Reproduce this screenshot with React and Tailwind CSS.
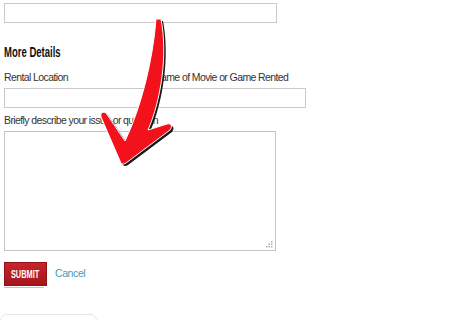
export default function App() {
  const arrow =
    'M156 19 L161 19 C168 55 161 100 148 130 L167 124 C171 123 173 126 170 130 L126 163 C123 165 121 164 120 161 L101 117 C100 113 103 111 106 113 L125 141 C141 108 153 60 156 19 Z'

  return (
    <div className="relative w-[460px] h-[320px] overflow-hidden bg-white pl-1 font-['Liberation_Sans',Arial,sans-serif] text-[#333]">
      {/* Top field */}
      <div className="mt-[3px] h-[20px] w-[273px] border border-[#c9c9c9]" />

      {/* Section */}
      <h2 className="mt-[21px] h-[16px] origin-left scale-x-[0.68] text-[14px] leading-[16px] font-bold text-[#111]">
        More Details
      </h2>

      <div className="mt-[11px] flex text-[10.5px] leading-[13px] tracking-[-0.6px]">
        <span className="w-[150px]">Rental Location</span>
        <span>Name of Movie or Game Rented</span>
      </div>
      <div className="mt-[4px] h-[20px] w-[302px] border border-[#c9c9c9]" />

      <div className="mt-[6px] text-[10.5px] leading-[13px] tracking-[-0.6px]">
        Briefly describe your issue or question
      </div>
      <div className="relative mt-[4px] h-[120px] w-[272px] border border-[#c4c4c4]">
        <svg className="absolute right-[2px] bottom-[2px]" width="7" height="7" viewBox="0 0 7 7">
          <rect x="5" y="0" width="1.5" height="1.5" fill="#aaa" />
          <rect x="2.5" y="2.5" width="1.5" height="1.5" fill="#aaa" />
          <rect x="5" y="2.5" width="1.5" height="1.5" fill="#aaa" />
          <rect x="0" y="5" width="1.5" height="1.5" fill="#aaa" />
          <rect x="2.5" y="5" width="1.5" height="1.5" fill="#aaa" />
          <rect x="5" y="5" width="1.5" height="1.5" fill="#aaa" />
        </svg>
      </div>

      {/* Actions */}
      <div className="mt-[11px] flex items-center gap-[8px]">
        <button className="flex h-[24px] w-[43px] items-center justify-center bg-gradient-to-b from-[#c8242b] to-[#a3161c] border border-[#8e1217] text-white">
          <span className="inline-block scale-x-[0.67] text-[11px] font-bold leading-none">SUBMIT</span>
        </button>
        <a className="text-[10.5px] text-[#3d9dbf] tracking-[-0.4px]">Cancel</a>
      </div>
      <div className="mt-[1px] h-px w-[40px] bg-[#d9b3e6]" />

      <div className="mt-[26px] -ml-1 h-[30px] w-[97px] rounded-t-[7px] border border-[#e6e6e6]" />

      {/* Arrow overlay */}
      <svg className="absolute inset-0 pointer-events-none" width="460" height="320" viewBox="0 0 460 320">
        <path d={arrow} transform="translate(2 2)" fill="#1a1a1a" />
        <path d={arrow} fill="#f3121b" stroke="#fff" strokeWidth="1" strokeLinejoin="round" />
      </svg>
    </div>
  )
}
